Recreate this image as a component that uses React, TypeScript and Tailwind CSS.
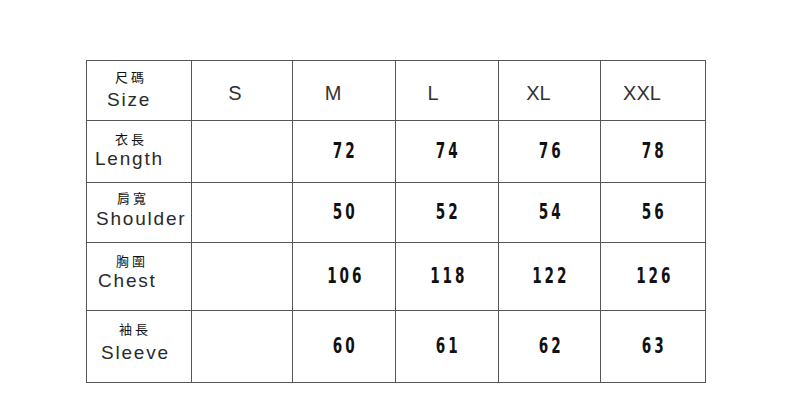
import React from "react";

type Row = {
  zh: string;
  en: string;
  pad: string;
  zhMl: string;
  enMl: string;
  enMt: string;
  values: string[];
};

const sizes: { label: string; cls: string }[] = [
  { label: "S", cls: "pr-[14px]" },
  { label: "M", cls: "pr-[22px]" },
  { label: "L", cls: "pr-[28px]" },
  { label: "XL", cls: "pr-[22px]" },
  { label: "XXL", cls: "pr-[22px]" },
];

const rows: Row[] = [
  { zh: "衣長", en: "Length", pad: "pt-[11px]", zhMl: "ml-[28px]", enMl: "ml-[8px]", enMt: "mt-[3px]", values: ["", "72", "74", "76", "78"] },
  { zh: "肩寬", en: "Shoulder", pad: "pt-[8px]", zhMl: "ml-[30px]", enMl: "ml-[9px]", enMt: "mt-[4px]", values: ["", "50", "52", "54", "56"] },
  { zh: "胸圍", en: "Chest", pad: "pt-[11px]", zhMl: "ml-[29px]", enMl: "ml-[11px]", enMt: "mt-[3px]", values: ["", "106", "118", "122", "126"] },
  { zh: "袖長", en: "Sleeve", pad: "pt-[11px]", zhMl: "ml-[32px]", enMl: "ml-[14px]", enMt: "mt-[7px]", values: ["", "60", "61", "62", "63"] },
];

const Label = ({ zh, en, pad, zhMl, enMl, enMt }: Omit<Row, "values">) => (
  <div className={`bg-white flex flex-col items-start ${pad}`}>
    <span
      className={`text-[13px] leading-[14px] tracking-[3px] text-[#111] font-['Noto_Sans_CJK_TC',sans-serif] ${zhMl}`}
    >
      {zh}
    </span>
    <span
      className={`text-[19px] leading-[20px] tracking-[1.8px] text-[#2a2a2a] font-['Liberation_Sans',Arial,sans-serif] ${enMl} ${enMt}`}
    >
      {en}
    </span>
  </div>
);

const App = () => {
  return (
    <div className="w-[790px] h-[408px] bg-white pt-[60px] pl-[86px]">
      <div className="inline-grid grid-cols-[104px_100px_102px_102px_101px_104px] grid-rows-[59px_61px_59px_67px_71px] gap-px p-px bg-[#555]">
        <Label zh="尺碼" en="Size" pad="pt-[9px]" zhMl="ml-[28px]" enMl="ml-[20px]" enMt="mt-[6px]" />
        {sizes.map((s) => (
          <div
            key={s.label}
            className={`bg-white flex items-center justify-center pt-[4px] text-[20px] text-[#333] font-['Liberation_Sans',Arial,sans-serif] ${s.cls}`}
          >
            {s.label}
          </div>
        ))}
        {rows.map((r) => (
          <React.Fragment key={r.en}>
            <Label zh={r.zh} en={r.en} pad={r.pad} zhMl={r.zhMl} enMl={r.enMl} enMt={r.enMt} />
            {r.values.map((v, i) => (
              <div key={i} className="bg-white flex items-center justify-center pl-[3px]">
                <span className="inline-block scale-x-[0.72] text-[21px] leading-none font-bold tracking-[4px] text-[#111] font-['DejaVu_Sans_Condensed',sans-serif]">
                  {v}
                </span>
              </div>
            ))}
          </React.Fragment>
        ))}
      </div>
    </div>
  );
};

export default App;
